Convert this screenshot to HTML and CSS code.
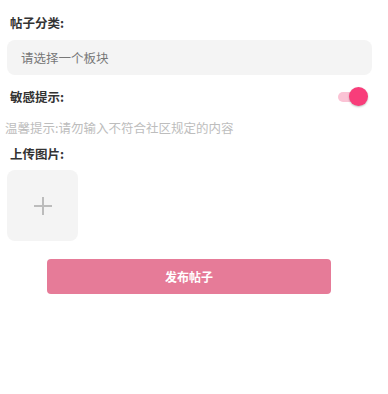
FILE: index.html
```html
<!DOCTYPE html>
<html lang="zh-CN">
<head>
<meta charset="utf-8">
<link rel="stylesheet" href="styles.css">
</head>
<body>
<div class="page">
  <div class="label label-first">帖子分类:</div>
  <div class="select">请选择一个板块</div>
  <div class="toggle-row">
    <div class="label">敏感提示:</div>
    <div class="switch"><span class="track"></span><span class="thumb"></span></div>
  </div>
  <div class="hint">温馨提示:请勿输入不符合社区规定的内容</div>
  <div class="label label-upload">上传图片:</div>
  <div class="upload">
    <svg width="20" height="20" viewBox="0 0 20 20"><path d="M10 1v18M1 10h18" stroke="#bcbcbc" stroke-width="2" fill="none"/></svg>
  </div>
  <div class="btn-wrap"><button class="submit">发布帖子</button></div>
</div>
</body>
</html>
```
FILE: styles.css
```css
html, body { margin: 0; padding: 0; background: #fff; }
body { font-family: "Noto Sans CJK SC", "Noto Sans", sans-serif; }
.page { width: 388px; }
.label { font-size: 12.5px; font-weight: bold; color: #333; line-height: 20px; padding-left: 10px; }
.label-first { margin-top: 13px; }
.select {
  margin: 7px 16px 0 7px;
  height: 35px;
  background: #f4f4f4;
  border-radius: 8px;
  font-size: 12.5px;
  color: #777;
  line-height: 35px;
  padding-left: 14px;
}
.toggle-row { height: 44px; display: flex; align-items: center; justify-content: space-between; padding-right: 20px; }
.switch { position: relative; width: 30px; height: 20px; }
.track { position: absolute; left: 0; top: 5px; width: 24px; height: 10px; border-radius: 5px; background: #fbc3d5; }
.thumb { position: absolute; right: 0; top: 0; width: 19px; height: 19px; border-radius: 50%; background: #f83d7a; box-shadow: 0 1px 2px rgba(0,0,0,0.25); }
.hint { font-size: 12.5px; color: #bdbdbd; line-height: 18px; padding-left: 5px; }
.label-upload { margin-top: 7px; }
.upload {
  margin: 6px 0 0 7px;
  width: 71px; height: 71px;
  background: #f4f4f4;
  border-radius: 8px;
  display: flex; align-items: center; justify-content: center;
}
.btn-wrap { padding: 18px 0 0 47px; }
.submit {
  width: 284px; height: 35px;
  border: 0; border-radius: 4px;
  background: #e67b98;
  color: #fff;
  font-family: "Noto Sans CJK SC", sans-serif;
  font-size: 12px; font-weight: bold;
  padding: 0;
}
```
